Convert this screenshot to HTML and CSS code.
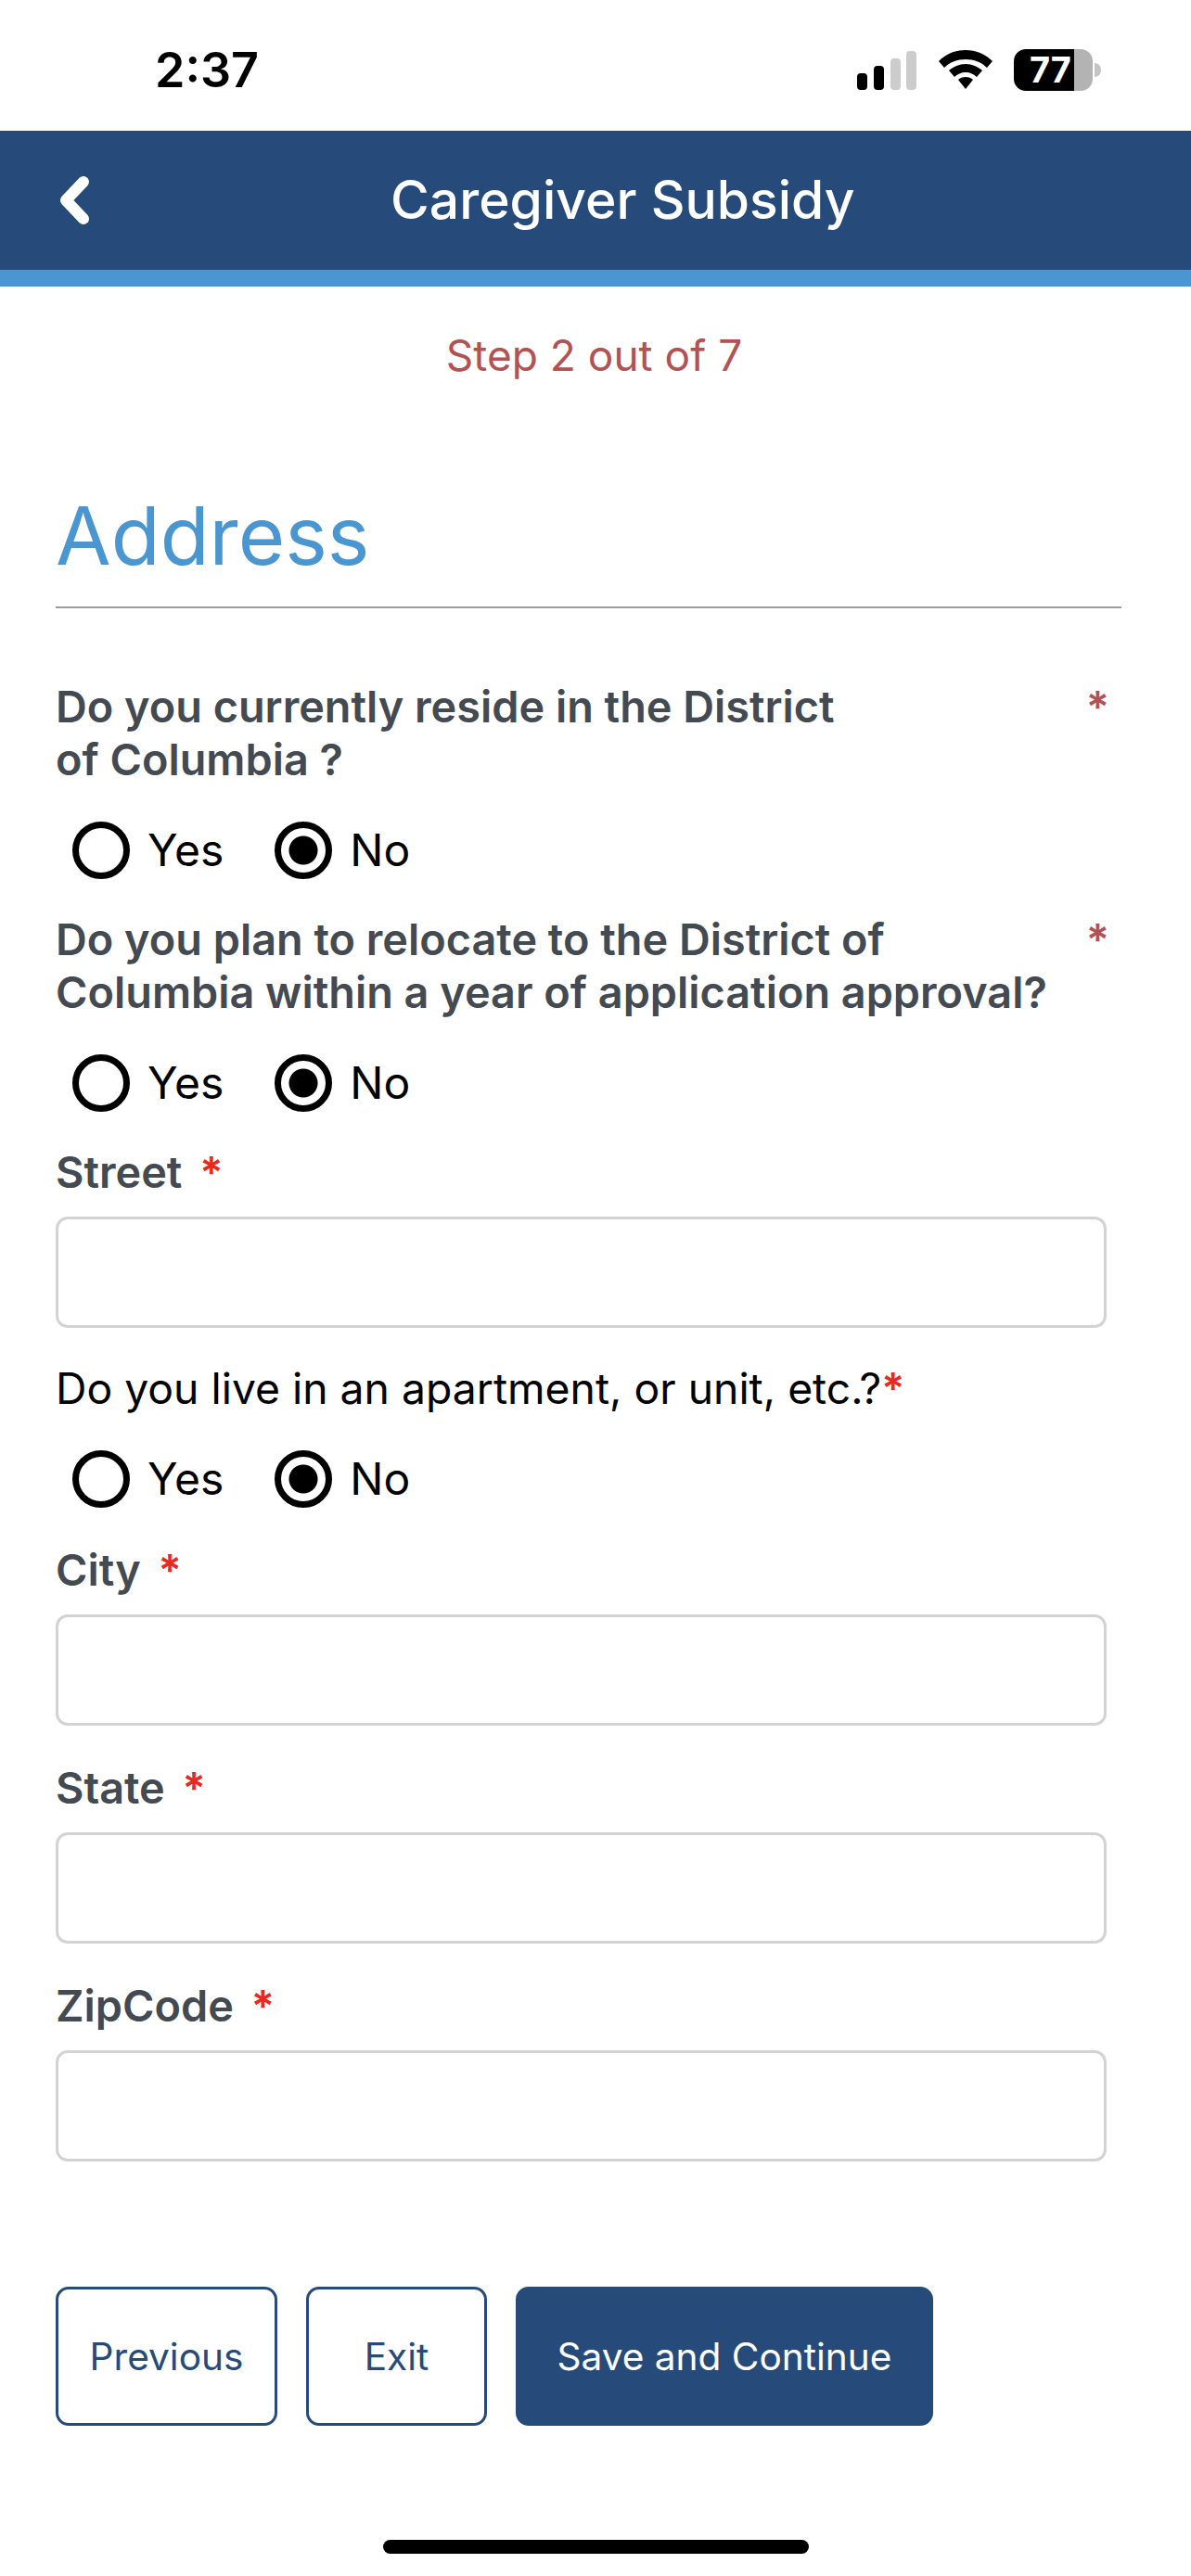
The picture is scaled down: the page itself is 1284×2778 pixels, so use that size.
FILE: index.html
```html
<!DOCTYPE html>
<html lang="en">
<head>
    <meta charset="UTF-8">
    <meta name="viewport" content="width=device-width, initial-scale=1.0">
    <title>Caregiver Subsidy</title>
    <link rel="stylesheet" href="styles.css">
</head>
<body>
    <div class="status-bar">
        <span class="time">2:37</span>
        <div class="status-icons">
            <svg class="signal" width="64" height="42" viewBox="0 0 64 42">
                <rect x="0" y="24" width="11" height="18" rx="4" fill="#000"/>
                <rect x="18" y="16" width="11" height="26" rx="4" fill="#000"/>
                <rect x="36" y="8" width="11" height="34" rx="4" fill="#ccc"/>
                <rect x="53" y="0" width="11" height="42" rx="4" fill="#ccc"/>
            </svg>
            <svg class="wifi" width="58" height="42" viewBox="0 0 58 42">
                <path d="M29 0C40 0 50 4 58 12L52 19C46 13 38 10 29 10C20 10 12 13 6 19L0 12C8 4 18 0 29 0Z" fill="#000"/>
                <path d="M29 15C36 15 42 18 47 22L41 29C38 26 34 24 29 24C24 24 20 26 17 29L11 22C16 18 22 15 29 15Z" fill="#000"/>
                <path d="M29 29C32 29 35 30 37 32L29 42L21 32C23 30 26 29 29 29Z" fill="#000"/>
            </svg>
            <div class="battery"><span>77</span></div>
        </div>
    </div>

    <header class="app-header">
        <svg class="back" width="36" height="54" viewBox="0 0 36 54">
            <polyline points="28,7 9,27 28,47" fill="none" stroke="#fff" stroke-width="12" stroke-linecap="round" stroke-linejoin="round"/>
        </svg>
        <h1>Caregiver Subsidy</h1>
    </header>

    <p class="step">Step 2 out of 7</p>

    <main class="form">
        <h2>Address</h2>

        <div class="question">
            <span>Do you currently reside in the District<br>of Columbia ?</span>
            <span class="mark">*</span>
        </div>
        <div class="radios">
            <label><input type="radio" name="reside"> Yes</label>
            <label><input type="radio" name="reside" checked> No</label>
        </div>

        <div class="question">
            <span>Do you plan to relocate to the District of<br>Columbia within a year of application approval?</span>
            <span class="mark">*</span>
        </div>
        <div class="radios">
            <label><input type="radio" name="relocate"> Yes</label>
            <label><input type="radio" name="relocate" checked> No</label>
        </div>

        <label class="field-label">Street <span class="req">*</span></label>
        <input class="field" type="text">

        <div class="plain-question">Do you live in an apartment, or unit, etc.?<span class="req-tight">*</span></div>
        <div class="radios">
            <label><input type="radio" name="unit"> Yes</label>
            <label><input type="radio" name="unit" checked> No</label>
        </div>

        <label class="field-label">City <span class="req">*</span></label>
        <input class="field" type="text">

        <label class="field-label">State <span class="req">*</span></label>
        <input class="field" type="text">

        <label class="field-label">ZipCode <span class="req">*</span></label>
        <input class="field" type="text">

        <div class="actions">
            <button class="btn outline prev">Previous</button>
            <button class="btn outline exit">Exit</button>
            <button class="btn solid">Save and Continue</button>
        </div>
    </main>

    <div class="home-bar"></div>
</body>
</html>
```

FILE: styles.css
```css
* {
    box-sizing: border-box;
}
body {
    margin: 0;
    width: 1284px;
    height: 2778px;
    overflow: hidden;
    background-color: #fff;
    font-family: Inter, "Liberation Sans", sans-serif;
    position: relative;
}

/* status bar */
.status-bar {
    height: 141px;
    display: flex;
    justify-content: space-between;
    align-items: flex-start;
    padding: 46px 106px 0 167px;
}
.time {
    font-size: 52px;
    line-height: 60px;
    font-weight: 600;
    color: #000;
}
.status-icons {
    display: flex;
    align-items: flex-start;
    padding-top: 7px;
}
.signal {
    margin-top: 2px;
    margin-right: 24px;
}
.wifi {
    margin-top: 1px;
    margin-right: 23px;
}
.battery {
    width: 85px;
    height: 45px;
    border-radius: 13px;
    background: linear-gradient(to right, #000 65px, #b3b3b3 65px);
    position: relative;
    color: #fff;
    font-size: 38px;
    font-weight: 700;
    line-height: 45px;
    padding-left: 17px;
}
.battery::after {
    content: "";
    position: absolute;
    left: 87px;
    top: 15px;
    width: 7px;
    height: 15px;
    border-radius: 0 8px 8px 0;
    background-color: #c4c4c4;
}

/* header */
.app-header {
    height: 168px;
    background-color: #264b7a;
    border-bottom: 18px solid #4a96d0;
    display: flex;
    align-items: center;
    position: relative;
}
.back {
    position: absolute;
    left: 62px;
    top: 48px;
}
.app-header h1 {
    margin: 0 0 0 421px;
    color: #fff;
    font-size: 57px;
    font-weight: 500;
    line-height: 70px;
}

.step {
    margin: 49px 0 0;
    text-align: center;
    color: #b25252;
    font-size: 46px;
    line-height: 50px;
    padding-right: 3px;
}

/* form */
.form {
    padding: 0 91px 0 60px;
}
.form h2 {
    margin: 112px -16px 0 0;
    height: 136px;
    border-bottom: 2px solid #9c9c9c;
    color: #4a96d0;
    font-size: 86.5px;
    font-weight: 400;
    line-height: 115px;
}
.question {
    display: flex;
    justify-content: space-between;
    margin-top: 78px;
    color: #444a51;
    font-size: 46.8px;
    font-weight: 600;
    line-height: 57px;
}
.question + .radios + .question {
    margin-top: 0;
}
.mark {
    color: #b25252;
    margin-right: -3px;
}
.radios {
    display: flex;
    gap: 55px;
    height: 99px;
    margin-top: 38px;
    padding-left: 18px;
    align-items: flex-start;
    font-size: 48px;
    line-height: 62px;
    color: #000;
}
.radios label {
    display: flex;
    align-items: center;
    gap: 19px;
}
.radios input {
    appearance: none;
    margin: 0;
    width: 62px;
    height: 62px;
    border: 7px solid #000;
    border-radius: 50%;
    background-color: #fff;
}
.radios input:checked {
    background: radial-gradient(circle, #000 15px, #fff 16px);
}
.field-label {
    display: block;
    color: #444a51;
    font-size: 46.8px;
    font-weight: 600;
    line-height: 57px;
}
.req {
    color: #e8291c;
    margin-left: 7px;
}
.field {
    display: block;
    width: 1133px;
    height: 120px;
    margin: 19px 0 0;
    border: 3px solid #d3d3d3;
    border-radius: 13px;
    background-color: #fff;
}
.field + .field-label {
    margin-top: 39px;
}
.plain-question {
    margin-top: 37px;
    color: #000;
    font-size: 46.3px;
    line-height: 57px;
}
.req-tight {
    color: #e8291c;
    font-weight: 600;
}
.plain-question + .radios {
    margin-top: 38px;
    height: 101px;
}

/* buttons */
.actions {
    display: flex;
    gap: 31px;
    margin-top: 135px;
}
.btn {
    height: 150px;
    border-radius: 14px;
    font-family: inherit;
    font-size: 40.6px;
    border: 3px solid #264b7a;
    padding: 0;
}
.outline {
    background-color: #fff;
    color: #264b7a;
}
.solid {
    background-color: #264b7a;
    color: #fff;
    width: 450px;
}
.prev {
    width: 239px;
}
.exit {
    width: 195px;
}

.home-bar {
    position: absolute;
    left: 413px;
    top: 2739px;
    width: 459px;
    height: 15px;
    border-radius: 8px;
    background-color: #000;
}
```
